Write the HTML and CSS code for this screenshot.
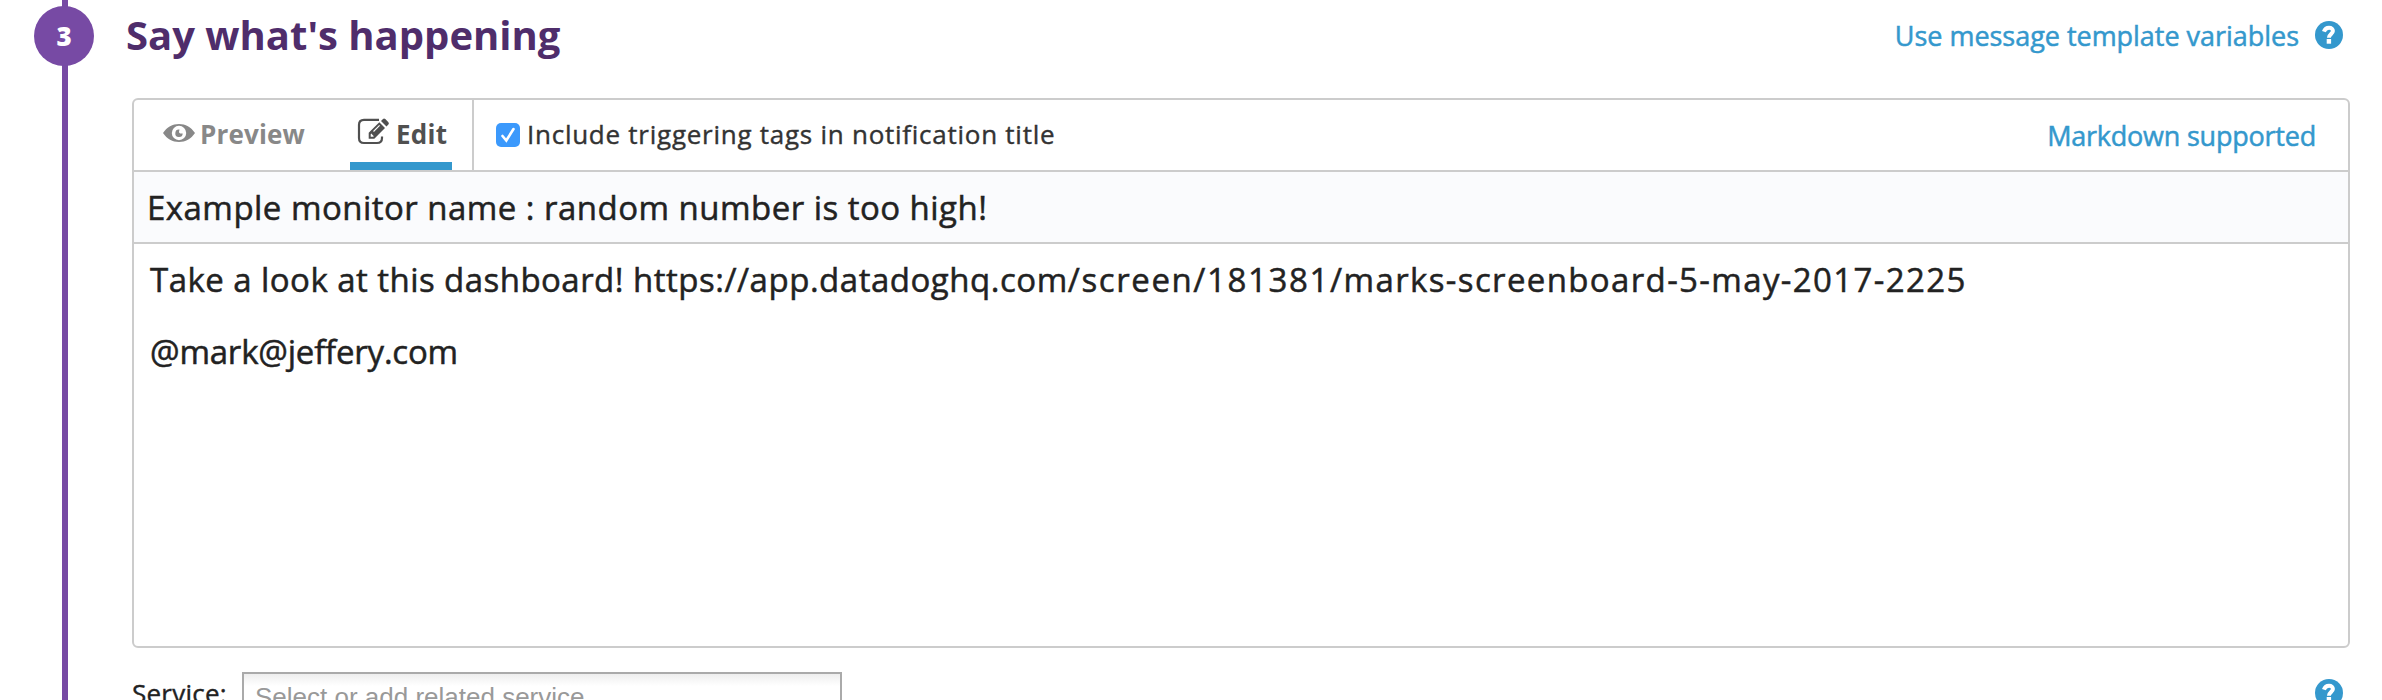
FILE: index.html
```
<!DOCTYPE html>
<html lang="en">
<head>
<meta charset="utf-8">
<title>Monitor editor</title>
<link rel="stylesheet" href="styles.css">
</head>
<body>
<div class="step">
  <div class="rail"><div class="rail-number">3</div></div>
  <main class="content">
    <header class="step-header">
      <h2 class="step-title">Say what's happening</h2>
      <a class="link template-link">Use message template variables</a>
      <svg class="help" viewBox="0 0 28 28"><circle cx="14" cy="14" r="14"/><path class="help-hook" d="M8.900 10.600C9.800 8 11.600 6.700 14 6.700C16.500 6.700 17.900 8.200 17.900 10C17.900 12.800 13.900 13.200 13.900 16.800"/><rect class="help-dot" x="11.700" y="18" width="4.400" height="4.700"/></svg>
    </header>
    <section class="editor">
      <div class="toolbar">
        <div class="tab tab-preview">
          <svg class="eye" viewBox="0 0 32 18"><path class="fill" fill-rule="evenodd" d="M0 9C4 3 9.500 0 16 0S28 3 32 9C28 15 22.500 18 16 18S4 15 0 9ZM16 1.800A7.200 7.200 0 1 0 16 16.200A7.200 7.200 0 1 0 16 1.800Z"/><path class="fill" d="M16.500 5.600A3.700 3.700 0 1 0 19.700 9.400H17.200A1.500 1.500 0 0 1 16 7.800Z"/></svg>
          <span>Preview</span>
        </div>
        <div class="tab tab-edit">
          <svg class="pencil" viewBox="0 0 33 28"><path class="outline" d="M22 1.800H7Q2 1.800 2 6.800V20Q2 25 7 25H20Q25 25 25 20V18.500"/><path class="fill" fill-rule="evenodd" d="M11.700 20.800V14.800L22.300 4.300L28 10L17.300 20.800ZM13.700 16.200V18.800H16.200L16.800 18.200L14.300 15.600ZM24 3L26 1Q27 0 28.300 1L31.400 4.200Q32.400 5.400 31.400 6.500L29.500 8.500Z"/><path class="shine" d="M16.500 13.500L22.600 7.400"/></svg>
          <span>Edit</span>
        </div>
        <label class="option">
          <svg class="check" viewBox="0 0 24 24"><rect width="24" height="24" rx="5"/><path d="M6.500 13L10.300 17.500L17.500 6"/></svg>
          <span>Include triggering tags in notification title</span>
        </label>
        <a class="link markdown-link">Markdown supported</a>
      </div>
      <div class="subject">Example monitor name : random number is too high!</div>
      <div class="message">
        <p class="line"><span class="line-intro">Take a look at this dashboard! </span><span class="url-host">https://app.datadoghq.com</span><span class="url-path">/screen/181381/</span><span class="url-slug">marks-screenboard-5-may-2017-2225</span></p>
        <p class="line line-mention">@mark@jeffery.com</p>
      </div>
    </section>
    <div class="service">
      <span class="service-label">Service:</span>
      <div class="service-input">Select or add related service</div>
      <svg class="help service-help" viewBox="0 0 28 28"><circle cx="14" cy="14" r="14"/><path class="help-hook" d="M8.900 10.600C9.800 8 11.600 6.700 14 6.700C16.500 6.700 17.900 8.200 17.900 10C17.900 12.800 13.900 13.200 13.900 16.800"/><rect class="help-dot" x="11.700" y="18" width="4.400" height="4.700"/></svg>
    </div>
  </main>
</div>
</body>
</html>
```
FILE: styles.css
```
* { box-sizing: border-box; }
body {
  margin: 0;
  height: 700px;
  overflow: hidden;
  background: #fff;
  color: #222;
  font: 26px/36px "Open Sans", "Noto Sans", sans-serif;
}
.step { display: flex; height: 700px; }
.rail {
  flex: none;
  width: 60px;
  margin: 0 38px 0 34px;
  padding-top: 6px;
  background: linear-gradient(#774aa4, #774aa4) 28px 0 / 6px 100% no-repeat;
}
.rail-number {
  height: 60px;
  border-radius: 50%;
  background: #774aa4;
  color: #fff;
  font-size: 26px;
  font-weight: 800;
  line-height: 60px;
  text-align: center;
}
.content { flex: none; width: 2218px; }
.step-header { display: flex; height: 98px; padding-right: 7px; }
.step-title {
  margin: 0 auto 0 -6px;
  color: #4f2d6b;
  font-size: 40px;
  font-weight: 700;
  line-height: 70px;
}
.link { color: #3498cd; font-size: 27px; -webkit-text-stroke: 0.5px currentColor; }
.template-link { padding-top: 18px; margin-right: 16px; letter-spacing: -0.03px; }
.help { flex: none; width: 28px; height: 28px; margin-top: 21px; fill: #3498cd; }
.help-hook { fill: none; stroke: #fff; stroke-width: 4; }
.help-dot { fill: #fff; }
.editor { height: 550px; border: 2px solid #ccc; border-radius: 6px; }
.toolbar { display: flex; height: 72px; border-bottom: 2px solid #ccc; }
.tab { display: flex; font-weight: 700; padding-top: 16px; }
.tab-preview { width: 216px; padding-left: 29px; color: #888; letter-spacing: 0.15px; }
.eye { width: 32px; height: 18px; margin: 8px 5px 0 0; }
.fill { fill: currentColor; }
.tab-edit {
  width: 102px;
  padding-left: 7px;
  border-bottom: 8px solid #3498cd;
  color: #505050;
  letter-spacing: 0.3px;
}
.pencil { width: 33px; height: 28px; margin: 2px 6px 0 0; }
.outline { fill: none; stroke: currentColor; stroke-width: 2.2; }
.shine { fill: none; stroke: #fff; stroke-width: 1.1; }
.option {
  display: flex;
  margin: 0 auto 0 20px;
  padding: 16px 0 0 22px;
  border-left: 2px solid #ccc;
  color: #333;
  letter-spacing: 0.74px;
  -webkit-text-stroke: 0.4px currentColor;
}
.check { width: 24px; height: 24px; margin: 7px 7px 0 0; fill: #3b99fc; }
.check path { fill: none; stroke: #fff; stroke-width: 2.6; stroke-linecap: round; }
.markdown-link { padding: 18px 32px 0 0; letter-spacing: -0.22px; }
.subject {
  height: 72px;
  padding-left: 13px;
  border-bottom: 2px solid #ccc;
  background: #fafbfd;
  font-size: 33px;
  line-height: 72px;
  letter-spacing: 0.47px;
  -webkit-text-stroke: 0.5px currentColor;
}
.message { padding: 0 16px; font-size: 33px; -webkit-text-stroke: 0.5px currentColor; }
.line { margin: 0; height: 72px; line-height: 72px; white-space: nowrap; }
.line-intro { letter-spacing: 0.45px; }
.url-host { letter-spacing: 0.52px; }
.url-path { letter-spacing: 1.6px; }
.url-slug { letter-spacing: 1.36px; }
.line-mention { letter-spacing: -0.2px; }
.service { display: flex; height: 52px; padding: 24px 7px 0 0; }
.service-label {
  width: 110px;
  padding-top: 3px;
  letter-spacing: 0.25px;
  -webkit-text-stroke: 0.4px currentColor;
}
.service-input {
  width: 600px;
  height: 56px;
  margin-right: auto;
  padding: 5px 11px;
  border: 2px solid #aaa;
  background: linear-gradient(#eee, #fff 12px);
  color: #999;
  font-family: "Liberation Sans", Arial, sans-serif;
}
.service-help { margin-top: 7px; }
```
